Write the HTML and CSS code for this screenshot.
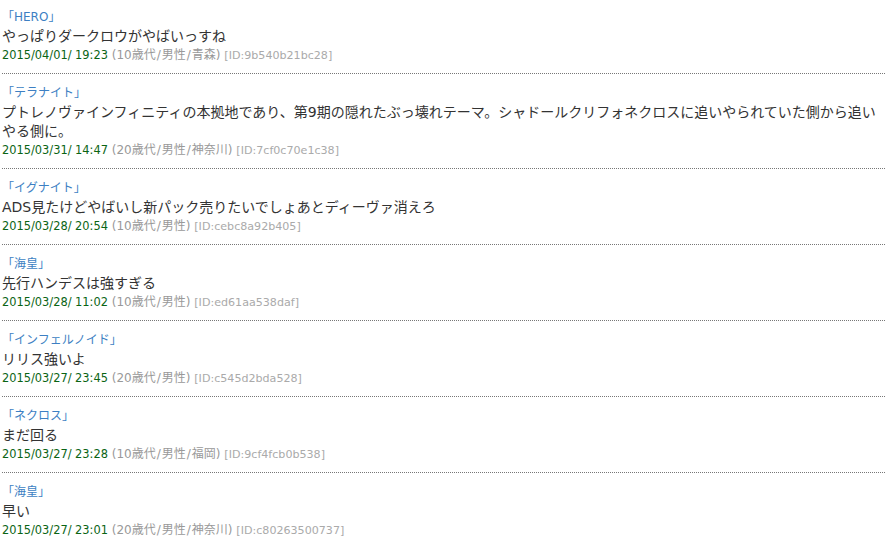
FILE: index.html
```html
<!DOCTYPE html>
<html lang="ja">
<head>
<meta charset="utf-8">
<title>comments</title>
<link rel="stylesheet" href="styles.css">
</head>
<body>
<ul class="comments">
  <li class="comment">
    <div class="name">「HERO」</div>
    <div class="text">やっぱりダークロウがやばいっすね</div>
    <div class="meta"><span class="date">2015/04/01/ 19:23</span> <span class="info">(10歳代<i>/</i>男性<i>/</i>青森)</span> <span class="id">[ID:9b540b21bc28]</span></div>
  </li>
  <li class="comment">
    <div class="name">「テラナイト」</div>
    <div class="text">プトレノヴァインフィニティの本拠地であり、第9期の隠れたぶっ壊れテーマ。シャドールクリフォネクロスに追いやられていた側から追いやる側に。</div>
    <div class="meta"><span class="date">2015/03/31/ 14:47</span> <span class="info">(20歳代<i>/</i>男性<i>/</i>神奈川)</span> <span class="id">[ID:7cf0c70e1c38]</span></div>
  </li>
  <li class="comment">
    <div class="name">「イグナイト」</div>
    <div class="text">ADS見たけどやばいし新パック売りたいでしょあとディーヴァ消えろ</div>
    <div class="meta"><span class="date">2015/03/28/ 20:54</span> <span class="info">(10歳代<i>/</i>男性)</span> <span class="id">[ID:cebc8a92b405]</span></div>
  </li>
  <li class="comment">
    <div class="name">「海皇」</div>
    <div class="text">先行ハンデスは強すぎる</div>
    <div class="meta"><span class="date">2015/03/28/ 11:02</span> <span class="info">(10歳代<i>/</i>男性)</span> <span class="id">[ID:ed61aa538daf]</span></div>
  </li>
  <li class="comment">
    <div class="name">「インフェルノイド」</div>
    <div class="text">リリス強いよ</div>
    <div class="meta"><span class="date">2015/03/27/ 23:45</span> <span class="info">(20歳代<i>/</i>男性)</span> <span class="id">[ID:c545d2bda528]</span></div>
  </li>
  <li class="comment">
    <div class="name">「ネクロス」</div>
    <div class="text">まだ回る</div>
    <div class="meta"><span class="date">2015/03/27/ 23:28</span> <span class="info">(10歳代<i>/</i>男性<i>/</i>福岡)</span> <span class="id">[ID:9cf4fcb0b538]</span></div>
  </li>
  <li class="comment">
    <div class="name">「海皇」</div>
    <div class="text">早い</div>
    <div class="meta"><span class="date">2015/03/27/ 23:01</span> <span class="info">(20歳代<i>/</i>男性<i>/</i>神奈川)</span> <span class="id">[ID:c80263500737]</span></div>
  </li>
</ul>
</body>
</html>
```

FILE: styles.css
```css
html, body {
  margin: 0;
  padding: 0;
  background: #fff;
}
body {
  font-family: "DejaVu Sans", "Noto Sans CJK JP", sans-serif;
  color: #333;
}
.comments {
  list-style: none;
  margin: 0;
  padding: 0 0 0 2px;
}
.comment {
  padding: 9px 0 8px;
  border-bottom: 1px dotted #777;
}
.comment:first-child {
  padding-top: 7px;
}
.name {
  font-size: 12px;
  line-height: 20px;
  color: #3d7fc3;
}
.text {
  font-size: 14px;
  line-height: 19px;
  color: #333;
}
.meta {
  font-size: 12px;
  line-height: 19px;
}
.date {
  color: #0a6414;
  font-size: 11.4px;
}
.info {
  color: #999;
}
.info i {
  font-style: normal;
  margin: 0 1px;
}
.id {
  color: #aaa;
  font-size: 11.1px;
}
```
